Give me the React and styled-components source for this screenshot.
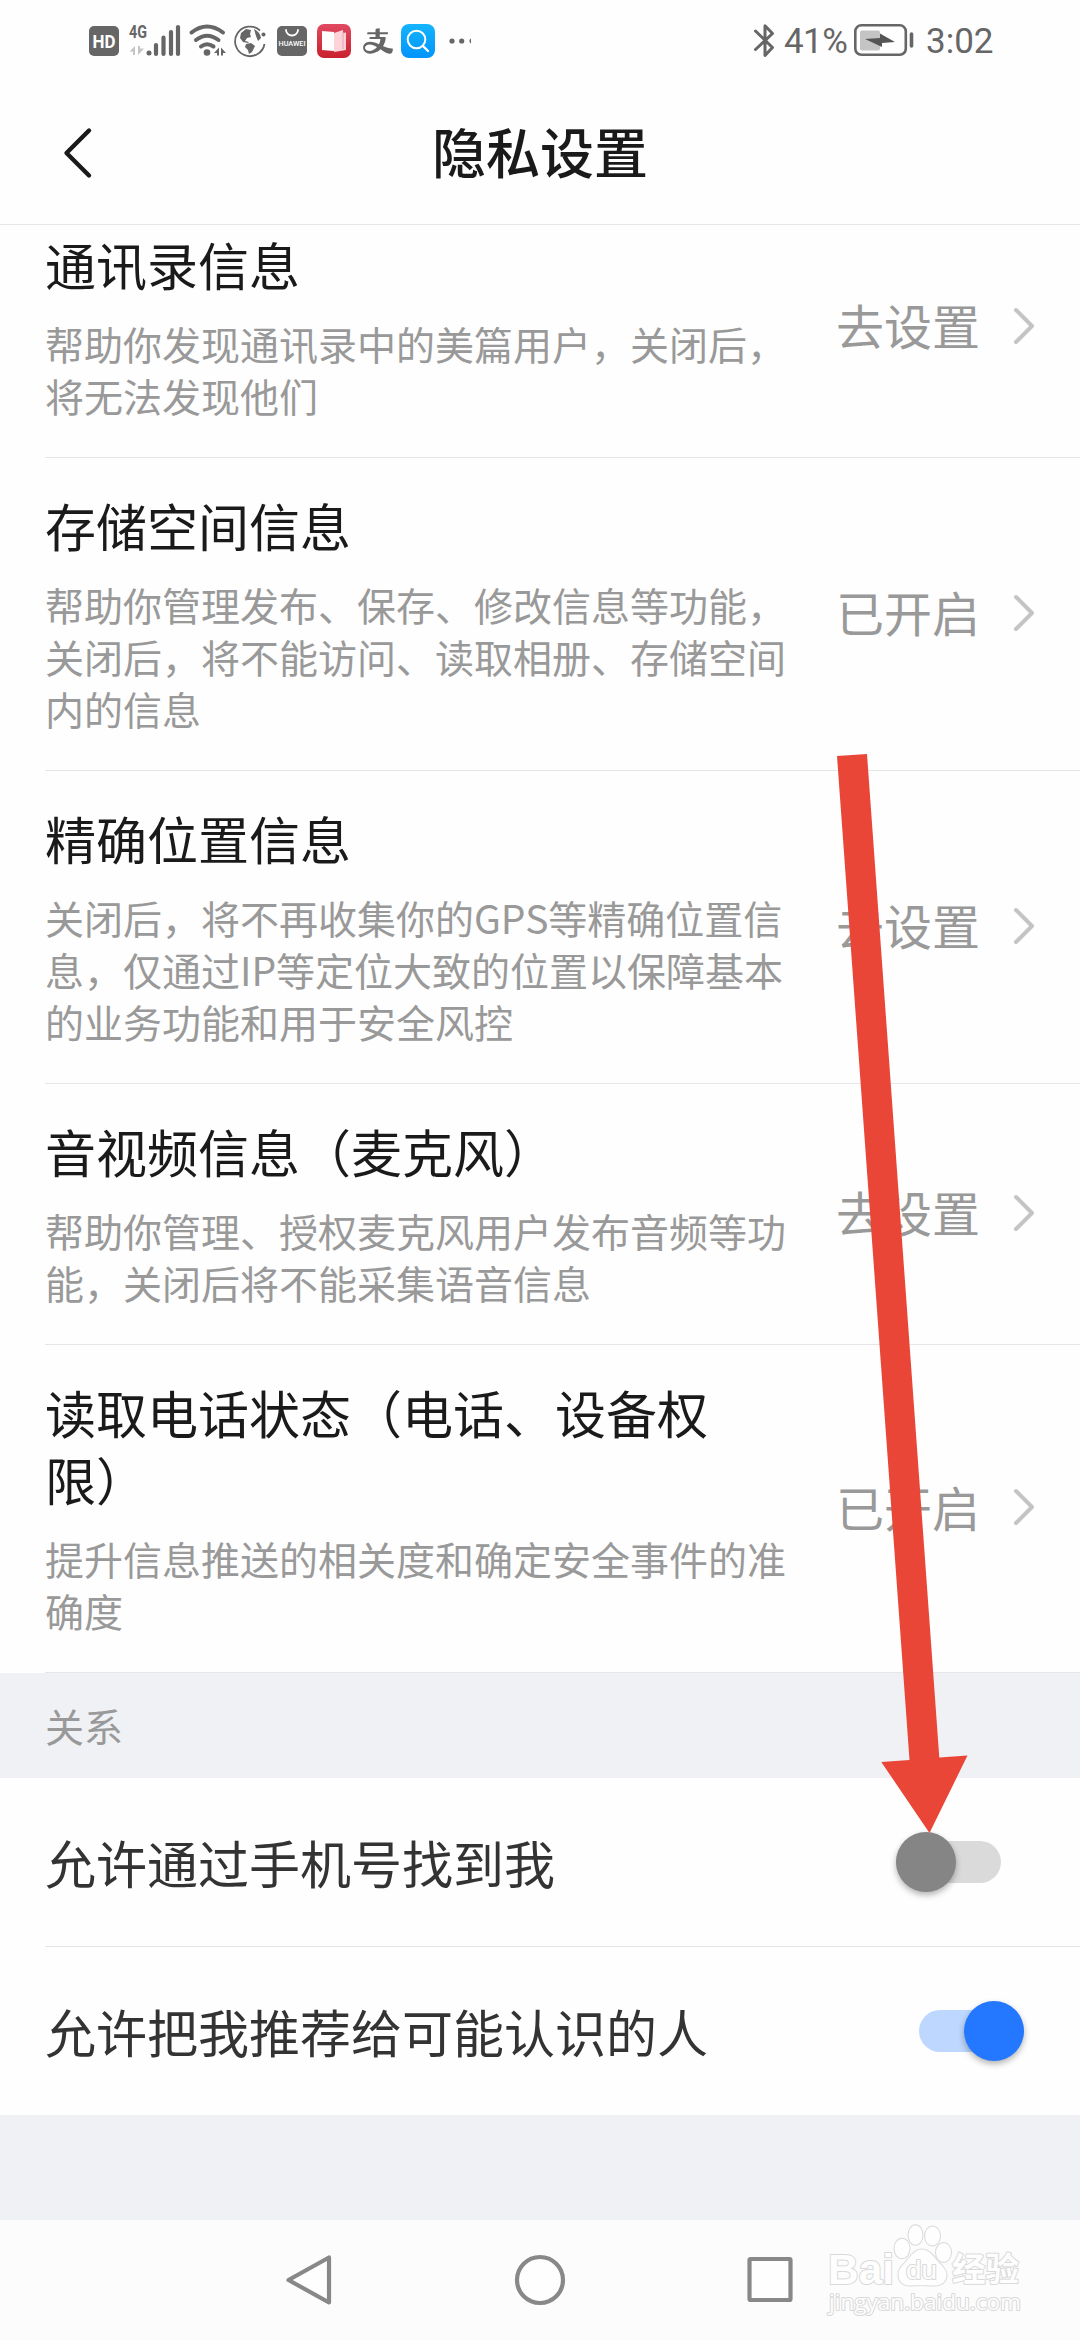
import React from 'react';
import styled, { createGlobalStyle } from 'styled-components';
import { AiOutlineAlipay } from 'react-icons/ai';

const GlobalStyle = createGlobalStyle`
  * { box-sizing: border-box; }
  body {
    margin: 0;
    background: #fefefe;
    font-family: "Noto Sans CJK SC", "Noto Sans", sans-serif;
  }
`;

const Screen = styled.div`
  position: relative;
  display: flex;
  flex-direction: column;
  width: 1080px;
  height: 2340px;
  overflow: hidden;
  background: #fefefe;
`;

const StatusBar = styled.header`
  display: flex;
  justify-content: space-between;
  align-items: center;
  height: 82px;
  padding: 0 88px 0 89px;
  color: #666;
`;

const StatusGroup = styled.div`
  display: flex;
  align-items: center;
`;

const StatusIcon = styled.svg`
  display: block;
  flex: none;
  width: ${(p) => p.$w}px;
  height: 34px;
  margin-left: ${(p) => p.$gap || 0}px;
  overflow: visible;
`;

const AlipayIcon = styled(AiOutlineAlipay)`
  flex: none;
  width: 36px;
  height: 34px;
  margin-left: 9px;
`;

const StatusText = styled.span`
  font-family: Roboto, "Noto Sans", sans-serif;
  font-size: 35px;
  line-height: 34px;
  padding-top: 2px;
  white-space: nowrap;
  width: ${(p) => p.$w}px;
  margin-left: ${(p) => p.$gap}px;
  letter-spacing: ${(p) => p.$track || 0}px;
`;

const TitleBar = styled.div`
  display: grid;
  grid-template-columns: 120px 1fr 120px;
  align-items: center;
  height: 143px;
  border-bottom: 1px solid #e6e6e6;
`;

const BackButton = styled.button`
  display: flex;
  padding: 0 0 0 60px;
  border: 0;
  background: none;
  color: #1a1a1a;
`;

const PageTitle = styled.h1`
  margin: 0;
  text-align: center;
  font-size: 54px;
  font-weight: 500;
  line-height: 70px;
  color: #1a1a1a;
  padding-bottom: 5px;
`;

const ScrollArea = styled.main`
  height: 1995px;
  overflow: hidden;
  background: #f0f1f5;
`;

const PermissionList = styled.ul`
  list-style: none;
  margin: -28px 0 0;
  padding: 0;
  background: #fefefe;
`;

const PermissionRow = styled.li`
  display: flex;
  justify-content: space-between;
  align-items: center;
  margin-left: 45px;
  padding: 34px 45px 36px 0;
  border-bottom: 1px solid #e6e6e6;
`;

const PermissionText = styled.div`
  display: flex;
  flex-direction: column;
  gap: 19px;
`;

const RowTitle = styled.h2`
  margin: 0;
  font-size: 51px;
  font-weight: 400;
  line-height: 67px;
  color: #1a1a1a;
  white-space: pre;
`;

const RowNote = styled.p`
  margin: 0;
  font-size: 39px;
  line-height: 52px;
  color: #999;
  white-space: pre;
`;

const RowAction = styled.div`
  display: flex;
  align-items: center;
  gap: 33px;
  font-size: 48px;
  line-height: 60px;
  color: #999;
  white-space: nowrap;
`;

const ActionLabel = styled.span`
  padding-bottom: 4px;
`;

const Chevron = styled.svg`
  display: block;
  width: 22px;
  height: 38px;
  margin-bottom: 1px;
`;

const SectionTitle = styled.div`
  height: 105px;
  padding-left: 45px;
  font-size: 39px;
  line-height: 104px;
  color: #999;
`;

const ToggleList = styled.div`
  background: #fefefe;
`;

const ToggleRow = styled.label`
  display: flex;
  justify-content: space-between;
  align-items: center;
  height: ${(p) => (p.$divided ? 169 : 168)}px;
  margin-left: 45px;
  padding-right: ${(p) => (p.$inset ? 79 : 56)}px;
  border-bottom: ${(p) => (p.$divided ? '1px solid #e6e6e6' : '0')};
  font-size: 51px;
  color: #333;
`;

const Track = styled.span`
  display: flex;
  align-items: center;
  justify-content: ${(p) => (p.$on ? 'flex-end' : 'flex-start')};
  width: 105px;
  height: 42px;
  margin-bottom: 1px;
  border-radius: 21px;
  background: ${(p) => (p.$on ? '#bdd7ff' : '#dadada')};
`;

const Thumb = styled.span`
  width: 60px;
  height: 60px;
  border-radius: 50%;
  background: ${(p) => (p.$on ? '#2478ff' : '#858585')};
  box-shadow: 0 3px 6px rgba(0, 0, 0, 0.3);
`;

const NavBar = styled.nav`
  display: grid;
  grid-template-columns: 305px 1fr 305px;
  align-items: center;
  justify-items: center;
  height: 120px;
  padding: 0 156px;
  background: #fcfcfc;
`;

const NavIcon = styled.svg`
  display: block;
  width: 52px;
  height: 52px;
  fill: #fefefe;
  stroke: #888;
  stroke-width: 4.2;
  stroke-linejoin: round;
`;

const ArrowMark = styled.svg`
  position: absolute;
  left: 830px;
  top: 750px;
  width: 140px;
  height: 1086px;
`;

const Watermark = styled.svg`
  position: absolute;
  left: 820px;
  top: 2215px;
  width: 210px;
  height: 115px;
  fill: #fefefe;
  stroke: #d9d9d9;
  stroke-width: 2;
  stroke-linejoin: round;
  paint-order: stroke;
`;

const permissions = [
  {
    title: '通讯录信息',
    note: '帮助你发现通讯录中的美篇用户，关闭后，\n将无法发现他们',
    action: '去设置',
  },
  {
    title: '存储空间信息',
    note: '帮助你管理发布、保存、修改信息等功能，\n关闭后，将不能访问、读取相册、存储空间\n内的信息',
    action: '已开启',
  },
  {
    title: '精确位置信息',
    note: '关闭后，将不再收集你的GPS等精确位置信\n息，仅通过IP等定位大致的位置以保障基本\n的业务功能和用于安全风控',
    action: '去设置',
  },
  {
    title: '音视频信息（麦克风）',
    note: '帮助你管理、授权麦克风用户发布音频等功\n能，关闭后将不能采集语音信息',
    action: '去设置',
  },
  {
    title: '读取电话状态（电话、设备权\n限）',
    note: '提升信息推送的相关度和确定安全事件的准\n确度',
    action: '已开启',
  },
];

const toggles = [
  { label: '允许通过手机号找到我', on: false },
  { label: '允许把我推荐给可能认识的人', on: true },
];

function LeftStatus() {
  return (
    <StatusGroup>
      <StatusIcon $w={30} viewBox="0 0 30 34">
        <rect y="2" width="30" height="30" rx="5" fill="#666" />
        <text x="15" y="24" textAnchor="middle" textLength="23" lengthAdjust="spacingAndGlyphs" fontFamily="Roboto" fontWeight="700" fontSize="19" fill="#fff">HD</text>
      </StatusIcon>
      <StatusIcon $w={51} $gap={10} viewBox="0 0 51 34">
        <text x="0" y="14" textLength="18" lengthAdjust="spacingAndGlyphs" fontFamily="Roboto" fontWeight="700" fontSize="18.5" fill="#666">4G</text>
        <path d="M0.500 27.500L6 22v9H4v-3.500zM9 22h2v2.500h4L9 31z" fill="#c4c4c4" />
        <circle cx="20" cy="29" r="2.500" fill="#666" />
        <path d="M27 21v9M34.500 13.500v16.500M42 8v22M49 3v27" stroke="#666" strokeWidth="4.200" strokeLinecap="round" />
      </StatusIcon>
      <StatusIcon $w={37} $gap={9} viewBox="0 0 37 34">
        <g fill="none" stroke="#666" strokeWidth="4" strokeLinecap="round">
          <path d="M2.500 8.500Q18 -3.500 34 8.500" />
          <path d="M7 16Q18 7.500 29.500 16" />
          <path d="M12 22.500Q18 18 24.500 22.500" />
        </g>
        <circle cx="18" cy="28.500" r="3.300" fill="#666" />
        <path d="M25 29l5-5.500v8h-2v-2.500zM32 23.500l5 5.500h-3v2.500h-2z" fill="#666" />
      </StatusIcon>
      <StatusIcon $w={32} $gap={8} viewBox="0 0 32 34">
        <path d="M26 6.500A14.800 14.800 0 1 0 30.500 20" fill="none" stroke="#666" strokeWidth="1.800" />
        <circle cx="29.500" cy="10.500" r="2" fill="#666" />
        <path d="M7 9l5-4 5 1-1 4 1 3-4 1-2 3 4 1-1 1-5-1-3-4zM12 20l5-1 4 3-3 6-3 2-1-4-3-3zM20 5q6 3 7 9l-3 3-2-5z" fill="#666" />
      </StatusIcon>
      <StatusIcon $w={30} $gap={11} viewBox="0 0 30 34">
        <rect y="2" width="30" height="30" rx="5" fill="#666" />
        <path d="M9 6a6 5.500 0 0 0 12 0" fill="none" stroke="#fff" strokeWidth="1.800" strokeLinecap="round" />
        <text x="15" y="22" textAnchor="middle" textLength="27" lengthAdjust="spacingAndGlyphs" fontFamily="Roboto" fontWeight="500" fontSize="7.500" fill="#fff">HUAWEI</text>
      </StatusIcon>
      <StatusIcon $w={34} $gap={10} viewBox="0 0 34 34">
        <defs>
          <linearGradient id="book" x1="0" y1="0" x2="0" y2="1">
            <stop offset="0" stopColor="#e04a62" />
            <stop offset="1" stopColor="#c9202e" />
          </linearGradient>
        </defs>
        <rect width="34" height="34" rx="7" fill="url(#book)" />
        <path d="M5 7l12 1v19l-12-1z" fill="#fff" />
        <path d="M17 9l9-3v3l3-.5V26l-12 2z" fill="#fbd3d9" />
        <path d="M26 8v17" stroke="#eaa3ad" strokeWidth="1" />
      </StatusIcon>
      <AlipayIcon />
      <StatusIcon $w={34} $gap={5} viewBox="0 0 34 34">
        <defs>
          <linearGradient id="search" x1="0" y1="0" x2="0" y2="1">
            <stop offset="0" stopColor="#14b4fc" />
            <stop offset="1" stopColor="#0294fa" />
          </linearGradient>
        </defs>
        <rect width="34" height="34" rx="8" fill="url(#search)" />
        <circle cx="15.500" cy="15.500" r="8.800" fill="none" stroke="#fff" strokeWidth="2" />
        <path d="M22 22l5 5" stroke="#fff" strokeWidth="2.400" strokeLinecap="round" />
      </StatusIcon>
      <StatusIcon $w={24} $gap={14} viewBox="0 0 24 34" fill="#666">
        <circle cx="3" cy="17" r="2.600" />
        <circle cx="12.700" cy="17" r="2.600" />
        <path d="M22 14.600a2.600 2.600 0 0 0 0 4.800z" />
      </StatusIcon>
    </StatusGroup>
  );
}

function RightStatus() {
  return (
    <StatusGroup>
      <StatusIcon $w={21} viewBox="0 0 21 34" fill="none" stroke="#666" strokeWidth="3" strokeLinejoin="round" strokeLinecap="round">
        <path d="M1.500 7l17 16.500-7.500 8V1.800l7.500 7.700L1.500 25.500" />
      </StatusIcon>
      <StatusText $w={64} $gap={9} $track={-0.6}>41%</StatusText>
      <StatusIcon $w={60} $gap={6} viewBox="0 0 60 34">
        <rect x="1.300" y="1.300" width="50.500" height="29.500" rx="6" fill="none" stroke="#666" strokeWidth="2.600" />
        <rect x="6" y="6.500" width="20" height="20" rx="2" fill="#c4c4c4" />
        <path d="M11 15l15-1V9.500L41 18l-13 1v4z" fill="#555" />
        <path d="M57.500 10v12" stroke="#666" strokeWidth="3.600" strokeLinecap="round" />
      </StatusIcon>
      <StatusText $w={66} $gap={12}>3:02</StatusText>
    </StatusGroup>
  );
}

function SystemNav() {
  return (
    <NavBar>
      <NavIcon viewBox="0 0 52 52">
        <path d="M46 3.500v45L5.500 26z" />
      </NavIcon>
      <NavIcon viewBox="0 0 52 52">
        <circle cx="26" cy="26" r="23" />
      </NavIcon>
      <NavIcon viewBox="0 0 52 52">
        <rect x="3.500" y="5" width="41" height="41" rx="1" />
      </NavIcon>
    </NavBar>
  );
}

function BaiduWatermark() {
  return (
    <Watermark viewBox="0 0 210 115">
      <text x="8" y="69" textLength="66" lengthAdjust="spacingAndGlyphs" fontFamily="Liberation Sans" fontWeight="700" fontSize="43">Bai</text>
      <ellipse cx="82" cy="33.500" rx="7.500" ry="9.800" />
      <ellipse cx="95.500" cy="20" rx="7" ry="9.800" />
      <ellipse cx="112.500" cy="21" rx="7.500" ry="9.500" />
      <ellipse cx="123.500" cy="37.500" rx="7.500" ry="9.500" />
      <path d="M102 34.500c-7 0-11 6-15 11s-9 8-8.500 15c.5 8 6.500 10.500 13 10 7-.5 14-.5 20 0 9 .8 15-3 15-10.500 0-6-5-9.500-9-14s-8-11.500-15.500-11.500z" />
      <text x="86" y="64" textLength="31" lengthAdjust="spacingAndGlyphs" fontFamily="Liberation Sans" fontSize="26">du</text>
      <text x="132" y="66" textLength="67" lengthAdjust="spacingAndGlyphs" fontFamily="Noto Sans CJK SC" fontWeight="700" fontSize="33">经验</text>
      <text x="9" y="95" textLength="192" lengthAdjust="spacingAndGlyphs" fontFamily="Open Sans" fontSize="21">jingyan.baidu.com</text>
    </Watermark>
  );
}

export default function App() {
  return (
    <Screen>
      <GlobalStyle />
      <StatusBar>
        <LeftStatus />
        <RightStatus />
      </StatusBar>
      <TitleBar>
        <BackButton>
          <svg width="34" height="52" viewBox="0 0 34 52" fill="none" stroke="currentColor" strokeWidth="4.400" strokeLinecap="round" strokeLinejoin="round">
            <path d="M29 3.500L6.500 26 29 48.500" />
          </svg>
        </BackButton>
        <PageTitle>隐私设置</PageTitle>
      </TitleBar>
      <ScrollArea>
        <PermissionList>
          {permissions.map((item) => (
            <PermissionRow key={item.title}>
              <PermissionText>
                <RowTitle>{item.title}</RowTitle>
                <RowNote>{item.note}</RowNote>
              </PermissionText>
              <RowAction>
                <ActionLabel>{item.action}</ActionLabel>
                <Chevron viewBox="0 0 22 38" fill="none" stroke="#c4c4c4" strokeWidth="4" strokeLinecap="round" strokeLinejoin="round">
                  <path d="M3 3l16 16L3 35" />
                </Chevron>
              </RowAction>
            </PermissionRow>
          ))}
        </PermissionList>
        <SectionTitle>关系</SectionTitle>
        <ToggleList>
          {toggles.map((item, index) => (
            <ToggleRow key={item.label} $divided={index < toggles.length - 1} $inset={!item.on}>
              <span>{item.label}</span>
              <Track $on={item.on}>
                <Thumb $on={item.on} />
              </Track>
            </ToggleRow>
          ))}
        </ToggleList>
      </ScrollArea>
      <SystemNav />
      <ArrowMark viewBox="830 750 140 1086">
        <path d="M837 756L867 754 939.300 1757.500 967.500 1755.500 929.500 1833 881.300 1762 909.500 1760z" fill="#ea4638" />
      </ArrowMark>
      <BaiduWatermark />
    </Screen>
  );
}
